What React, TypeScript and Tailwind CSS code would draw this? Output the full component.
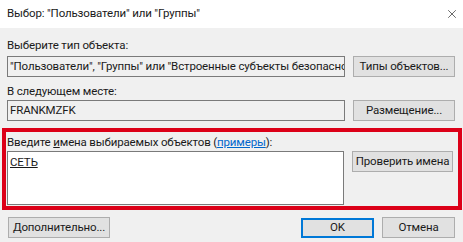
import { X } from "lucide-react"

const font = { fontFamily: 'Roboto, "Liberation Sans", sans-serif' }

function Btn({ children, className = "" }: { children: React.ReactNode; className?: string }) {
  return (
    <div
      className={
        "h-[21px] flex items-center justify-center whitespace-nowrap bg-[#e1e1e1] border border-[#adadad] text-[#1a1a1a] leading-none " +
        className
      }
    >
      {children}
    </div>
  )
}

export default function App() {
  return (
    <div
      className="w-[463px] h-[242px] bg-[#f0f0f0] overflow-hidden flex flex-col text-[11.5px] tracking-[-0.15px] text-[#1a1a1a]"
      style={font}
    >
      {/* Title bar */}
      <div className="h-[28px] bg-white flex items-center justify-between pl-[7px] pr-[4px] shrink-0">
        <span className="text-[11.5px] leading-none">Выбор: "Пользователи" или "Группы"</span>
        <X className="w-[14px] h-[14px] text-black" strokeWidth={1} />
      </div>

      <div className="flex flex-col px-[2px]">
        <div className="px-[5px] flex flex-col">
          <div className="mt-[9px] leading-[16px]">Выберите тип объекта:</div>
          <div className="mt-[3px] flex gap-[8px]">
            <div className="w-[338px] h-[21px] bg-[#f0f0f0] border border-[#7a7a7a] flex items-center px-[2px] overflow-hidden whitespace-nowrap">
              "Пользователи", "Группы" или "Встроенные субъекты безопасно
            </div>
            <Btn className="w-[102px]">Типы объектов...</Btn>
          </div>

          <div className="mt-[6px] leading-[16px]">В следующем месте:</div>
          <div className="mt-[1px] flex gap-[8px]">
            <div className="w-[338px] h-[21px] bg-[#f0f0f0] border border-[#7a7a7a] flex items-center px-[2px]">
              FRANKMZFK
            </div>
            <Btn className="w-[102px]">Размещение...</Btn>
          </div>
        </div>

        {/* Highlighted section */}
        <div className="mt-[7px] w-[460px] border-[4px] border-[#dc0018] flex flex-col pl-[1px] pb-[1px]">
          <div className="leading-[16px] pt-[2px]">
            Введите <span className="underline">и</span>мена выбираемых объектов (
            <span className="text-[#0066cc] underline">примеры</span>):
          </div>
          <div className="mt-[1px] flex gap-[8px] items-start">
            <div className="w-[337px] h-[54px] bg-white border border-[#7a7a7a] px-[2px] pt-[2px]">
              <span className="underline">СЕТЬ</span>
            </div>
            <Btn className="w-[101px]">Проверить имена</Btn>
          </div>
        </div>

        <div className="mt-[7px] px-[6px] flex items-center">
          <Btn className="w-[102px]">Дополнительно...</Btn>
          <div className="flex-1" />
          <div className="w-[73px] h-[20px] flex items-center justify-center bg-[#e1e1e1] border-2 border-[#0078d7]">
            OK
          </div>
          <Btn className="w-[73px] ml-[8px]">Отмена</Btn>
        </div>
      </div>
    </div>
  )
}
